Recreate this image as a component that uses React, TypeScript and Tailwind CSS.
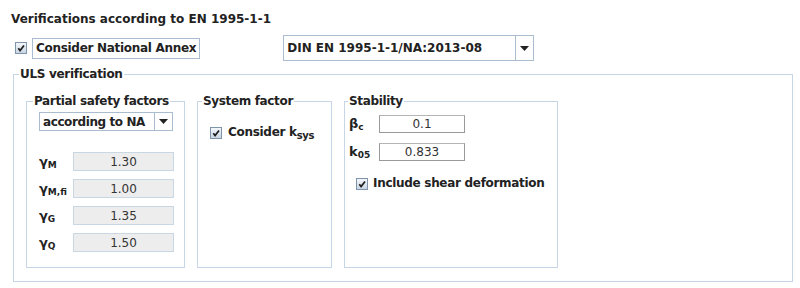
import React from 'react'

const font = { fontFamily: '"DejaVu Sans", "Liberation Sans", sans-serif' }

function CheckBox() {
    return (
        <span className="inline-flex items-center justify-center w-[12px] h-[12px] border border-[#7f93ab] bg-gradient-to-b from-[#f4f7fa] to-[#c9d6e3] shrink-0">
            <svg width="8" height="8" viewBox="0 0 8 8">
                <path d="M1.3 4.2 L3.1 6.6 L7 1.6" stroke="#1e1e1e" strokeWidth="1.7" fill="none" />
            </svg>
        </span>
    )
}

function Combo(props: { text: string; className?: string; textClass?: string }) {
    return (
        <div className={'flex items-stretch border border-[#a9bcd0] bg-white ' + (props.className ?? '')}>
            <div className={'flex-1 flex items-center pl-[3px] font-bold text-[12px] text-[#222] border-r border-[#a9bcd0] whitespace-nowrap ' + (props.textClass ?? '')}>
                {props.text}
            </div>
            <div className="w-[17px] flex items-center justify-center">
                <svg width="9" height="5" viewBox="0 0 9 5">
                    <path d="M0 0 H9 L4.5 5 Z" fill="#222" />
                </svg>
            </div>
        </div>
    )
}

function Box(props: { title: string; legendClass: string; className?: string; children?: React.ReactNode }) {
    return (
        <fieldset className={'border border-[#c6d6e6] p-0 ' + (props.className ?? '')}>
            <legend className={'px-[1px] font-bold text-[12px] leading-[14px] tracking-[-0.35px] text-[#222] whitespace-nowrap ' + props.legendClass}>
                {props.title}
            </legend>
            {props.children}
        </fieldset>
    )
}

function Factor(props: { sub: string; value: string }) {
    return (
        <div className="flex items-center h-[19px]">
            <span className="w-[34px] text-[13px] leading-[14px] text-[#222] font-semibold whitespace-nowrap">
                γ<sub className="text-[9px] font-bold">{props.sub}</sub>
            </span>
            <div className="w-[101px] h-[19px] flex items-center justify-center bg-[#ededed] border border-[#c9d6e3] text-[12px] text-[#333]">
                {props.value}
            </div>
        </div>
    )
}

function StabField(props: { sym: string; sub: string; value: string }) {
    return (
        <div className="flex items-center h-[18px]">
            <span className="w-[30px] text-[13px] leading-[14px] text-[#222] font-bold whitespace-nowrap">
                {props.sym}
                <sub className="text-[9px]">{props.sub}</sub>
            </span>
            <div className="w-[86px] h-[18px] flex items-center justify-center bg-white border border-[#9a9a9a] border-t-[#b5b5b5] text-[12px] text-[#333]">
                {props.value}
            </div>
        </div>
    )
}

export default function App() {
    return (
        <div className="w-[800px] h-[288px] bg-white overflow-hidden" style={font}>
            {/* header */}
            <div className="pl-[11px] pt-[11px] font-bold text-[12px] leading-[16px] text-[#222]">Verifications according to EN 1995-1-1</div>

            <div className="flex items-center h-[26px] mt-[8px]">
                <div className="ml-[15px] flex items-center">
                    <CheckBox />
                    <span className="ml-[5px] px-[3px] h-[21px] flex items-center border border-[#a9bcd0] font-bold text-[12px] tracking-[-0.3px] text-[#222]">
                        Consider National Annex
                    </span>
                </div>
                <Combo text="DIN EN 1995-1-1/NA:2013-08" className="ml-[83px] w-[251px] h-[26px]" />
            </div>

            {/* ULS verification */}
            <fieldset className="ml-[13px] mt-[6px] w-[780px] h-[215px] border border-[#c6d6e6] p-0">
                <legend className="ml-[5px] px-[1px] font-bold text-[12px] leading-[14px] tracking-[-0.3px] text-[#222]">ULS verification</legend>

                <div className="flex gap-[12px] mt-[13px] pl-[12px]">
                    {/* partial safety factors */}
                    <Box title="Partial safety factors" legendClass="ml-[6px]" className="w-[159px] h-[174px]">
                        <div className="pl-[12px]">
                            <Combo text="according to NA" textClass="tracking-[-0.4px]" className="mt-[4px] w-[134px] h-[19px]" />
                            <div className="flex flex-col gap-[8px] mt-[21px]">
                                <Factor sub="M" value="1.30" />
                                <Factor sub="M,fi" value="1.00" />
                                <Factor sub="G" value="1.35" />
                                <Factor sub="Q" value="1.50" />
                            </div>
                        </div>
                    </Box>

                    {/* system factor */}
                    <Box title="System factor" legendClass="ml-[4px]" className="w-[135px] h-[174px]">
                        <div className="flex items-center mt-[17px] ml-[12px]">
                            <CheckBox />
                            <span className="ml-[6px] font-bold text-[12px] leading-[15px] tracking-[-0.3px] text-[#222] whitespace-nowrap">
                                Consider k<sub className="text-[10px]">sys</sub>
                            </span>
                        </div>
                    </Box>

                    {/* stability */}
                    <Box title="Stability" legendClass="ml-[3px]" className="w-[214px] h-[174px]">
                        <div className="pl-[4px]">
                            <div className="flex flex-col gap-[10px] mt-[7px]">
                                <StabField sym="β" sub="c" value="0.1" />
                                <StabField sym="k" sub="05" value="0.833" />
                            </div>
                            <div className="flex items-center mt-[15px] ml-[7px]">
                                <CheckBox />
                                <span className="ml-[5px] font-bold text-[12px] leading-[15px] tracking-[-0.3px] text-[#222] whitespace-nowrap">
                                    Include shear deformation
                                </span>
                            </div>
                        </div>
                    </Box>
                </div>
            </fieldset>
        </div>
    )
}
